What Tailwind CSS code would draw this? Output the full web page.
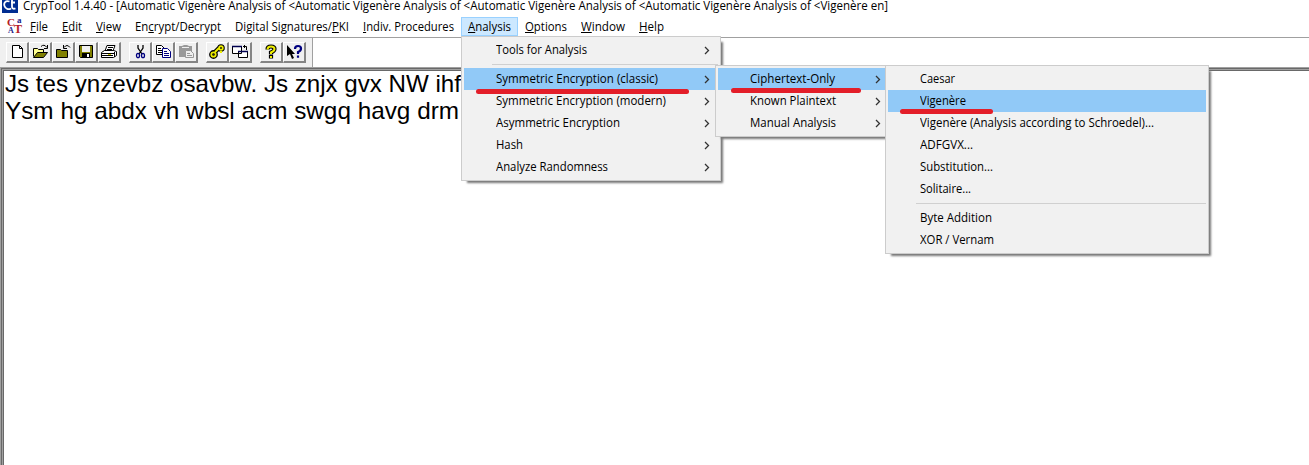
<!DOCTYPE html>
<html lang="en"><head><meta charset="utf-8"><title>CrypTool</title>
<script src="https://cdn.jsdelivr.net/npm/@tailwindcss/browser@4"></script></head>
<body class="w-[1309px] h-[465px] overflow-hidden relative bg-white text-black font-['Open_Sans','Noto_Sans',sans-serif] text-[12px] leading-[22px]">
<div class="flex flex-col h-full">
<header class="h-[15px] shrink-0 flex items-start leading-[12px]">
<svg class="w-[18px] h-[13px] shrink-0" viewBox="0 0 18 13"><path d="M2 0h16v13H2z" fill="#002d91"/><path d="M9.500 1.500C5.500 0 3.500 3 4.500 6c1 3 4 4 6.500 2.500M12 0v6.500q0 3 3.500 2M11 2.500h4" fill="none" stroke="#fff" stroke-width="1.800"/></svg>
<span class="ml-[5px] inline-block shrink-0 whitespace-nowrap origin-left" data-w="865">CrypTool 1.4.40 - [Automatic Vigenère Analysis of &lt;Automatic Vigenère Analysis of &lt;Automatic Vigenère Analysis of &lt;Automatic Vigenère Analysis of &lt;Vigenère en]</span>
</header>
<nav class="h-[22px] shrink-0 flex whitespace-nowrap leading-[24px] pl-[7px]">
<svg class="w-4 h-[18px] mt-[2px] mr-[7px] shrink-0" viewBox="0 0 16 18" font-family="Liberation Serif" font-weight="bold"><text x="0" y="9" font-size="11" fill="#b51c26">C</text><text x="10" y="6" font-size="9" fill="#25258a">a</text><text x="1" y="16" font-size="8" fill="#25258a">A</text><text x="7" y="16" font-size="12" fill="#b51c26">T</text></svg>
<span class="mr-[14px] shrink-0 origin-left" data-w="18"><u>F</u>ile</span><span class="mr-[14px] shrink-0 origin-left" data-w="20"><u>E</u>dit</span><span class="mr-[14px] shrink-0 origin-left" data-w="25"><u>V</u>iew</span><span class="mr-[14px] shrink-0 origin-left" data-w="86">En<u>c</u>rypt/Decrypt</span><span class="mr-[14px] shrink-0 origin-left" data-w="114">Digital Signatures/<u>P</u>KI</span><span class="mr-[7px] shrink-0 origin-left" data-w="91"><u>I</u>ndiv. Procedures</span>
<div class="w-[57px] h-[19px] mt-[2px] mr-[7px] pl-[6px] shrink-0 bg-[#cce8ff] border border-[#99d1ff] leading-[18px]"><span class="inline-block origin-left" data-w="43"><u>A</u>nalysis</span></div>
<span class="mr-[14px] shrink-0 origin-left" data-w="42"><u>O</u>ptions</span><span class="mr-[14px] shrink-0 origin-left" data-w="44"><u>W</u>indow</span><span class="shrink-0 origin-left" data-w="25"><u>H</u>elp</span>
</nav>
<div class="h-[30px] shrink-0 border-t border-[#a0a0a0] flex">
<div id="tools" class="w-[313px] bg-[#f0f0f0] border-r border-[#a0a0a0] flex pl-[6px] pt-[4px]"></div>
</div>
<div class="flex-1 border-t border-l border-[#a0a0a0]"><div class="h-full border-t border-l border-[#696969]"><div class="h-full border-t border-l border-[#a0a0a0]">
<main class="h-full border-t border-l border-[#696969] bg-white font-['Liberation_Sans',sans-serif] text-[24px] leading-[27px] pl-px whitespace-nowrap">
<div class="-mt-px"><span class="origin-left inline-block" data-w="456" data-font="24px Liberation Sans">Js tes ynzevbz osavbw. Js znjx gvx NW ihf</span></div>
<div><span class="origin-left inline-block" data-w="454" data-font="24px Liberation Sans">Ysm hg abdx vh wbsl acm swgq havg drm</span></div>
</main></div></div></div>
</div>
<section id="m1" class="absolute left-[461px] top-[36px] w-[260px] h-[145px] bg-[#f1f1f1] border border-[#ccc] p-[2px] shadow-[4px_4px_2px_-2px_#777]"></section>
<section id="m2" class="absolute left-[715px] top-[65px] w-[177px] h-[72px] bg-[#f1f1f1] border border-[#ccc] p-[2px] shadow-[4px_4px_2px_-2px_#777]"></section>
<section id="m3" class="absolute left-[885px] top-[65px] w-[324px] h-[189px] bg-[#f1f1f1] border border-[#ccc] p-[2px] shadow-[4px_4px_2px_-2px_#777]"></section>
<div class="absolute left-[476px] top-[89px] w-[213px] h-[5px] rounded-full bg-[#e31e29]"></div>
<div class="absolute left-[731px] top-[88px] w-[130px] h-[5px] rounded-full bg-[#e31e29]"></div>
<div class="absolute left-[900px] top-[109px] w-[93px] h-[5px] rounded-full bg-[#e31e29]"></div>
<script>
const icons={
new:'<path d="M5.500 2.500h7l3 3v9h-10z" fill="#fff" stroke="#000"/><path d="M12.500 2.500v3h3" fill="none" stroke="#000"/>',
open:'<path d="M3.500 13.500v-8h4l1 1h5v3" fill="#ffff90" stroke="#000"/><path d="M3.500 14.500l4-5h10l-4 5z" fill="#808000" stroke="#000"/><path d="M11 3.500q3-3 6 1M17.500 2v3.500H14" fill="none" stroke="#000"/>',
close:'<path d="M3.500 14.500v-8h4l1 1h6v7z" fill="#808000" stroke="#000"/><path d="M17 4.500q-3-4-6 0M10.500 2v3.500H14" fill="none" stroke="#000"/>',
save:'<path d="M3.500 2.500h13v12h-12l-1-1z" fill="#808000" stroke="#000"/><path d="M6 3h8v6H6z" fill="#f0f0f0"/><path d="M6 10h8v4H6z" fill="#000"/><path d="M11 11h2v3h-2z" fill="#fff"/>',
print:'<path d="M6 8l2-5.500h8L14 8M2.500 9.500l3-2h9l3 1v4l-3 2h-12z" fill="#fff" stroke="#000"/><path d="M9 4.500h5M8 6.500h5M3 10.500h12M3 12.500h11M15.500 9v5" stroke="#000"/><path d="M9 11.500h3" stroke="#cc0"/>',
cut:'<path d="M8 2v3l4 6M13 2v3L9 11" fill="none" stroke="#000" stroke-width="1.300"/><ellipse cx="8" cy="12.500" rx="1.500" ry="2.200" fill="none" stroke="#000080" stroke-width="1.300"/><ellipse cx="13" cy="12.500" rx="1.500" ry="2.200" fill="none" stroke="#000080" stroke-width="1.300"/>',
copy:'<path d="M3.500 2.500h5l3 3v6h-8z" fill="#fff" stroke="#000"/><path d="M5 5.500h3M5 7.500h4M5 9.500h4" stroke="#000"/><path d="M9.500 5.500h5l3 3v6h-8z" fill="#fff" stroke="#000080"/><path d="M11 8.500h3M11 10.500h5M11 12.500h5" stroke="#000080"/>',
paste:'<path d="M3 3h3l2-1h3l2 1h3v11H3z" fill="#999"/><path d="M6 4.500h7" stroke="#eee"/><path d="M9.500 7.500h5l3 3v4h-8z" fill="#eee" stroke="#999"/><path d="M11 10.500h3M11 12.500h5" stroke="#999"/>',
key:'<path d="M8 9l4-4" stroke="#000" stroke-width="4.500"/><circle cx="6.500" cy="11.500" r="2.300" fill="none" stroke="#000" stroke-width="4.200"/><circle cx="14" cy="5" r="1.800" fill="none" stroke="#000" stroke-width="4"/><path d="M8 9l4-4M14 8v2" stroke="#ee0" stroke-width="2"/><circle cx="6.500" cy="11.500" r="2.200" fill="none" stroke="#ee0" stroke-width="1.800"/><circle cx="14" cy="5" r="1.800" fill="none" stroke="#ee0" stroke-width="1.800"/>',
win:'<path d="M2.500 3.500h9v7h-9zM8.500 8.500h9v6h-9z" fill="#fff" stroke="#000"/><path d="M2 3.500h10M8 8.500h10" stroke="#000050" stroke-width="1.500"/><path d="M13 3.500h3.500V7M14.500 2v3" fill="none" stroke="#000"/>',
help:'<path d="M6.500 6.500q0-3 3.500-3t3.500 2.500q0 2-3.500 3.500v2M10 12v3.500" fill="none" stroke="#000" stroke-width="4.200"/><path d="M6.500 6.500q0-3 3.500-3t3.500 2.500q0 2-3.500 3.500v1.500M10 13v2" fill="none" stroke="#ee0" stroke-width="2"/>',
what:'<path d="M3 2v11l3-2 2 5 2-1-2-4h3z" fill="#000"/><path d="M11 6q0-3 3-3t3 2.500-3 3.500v2M14 12.500v2.200" fill="none" stroke="#000080" stroke-width="2.200"/>'};
const order=['new','open','close','save','print','','cut','copy','paste','','key','win','','help','what'];
document.getElementById('tools').innerHTML=order.map(k=>k?`<div class="w-[23px] h-[21px] bg-[#f0f0f0] border-r-2 border-b-2 border-r-[#858585] border-b-[#858585] border-l border-l-white border-t border-t-white shrink-0"><svg class="w-5 h-[18px]" viewBox="0 0 20 18">${icons[k]}</svg></div>`:'<div class="w-[8px] shrink-0"></div>').join('');
const menus={m1:[['Tools for Analysis',91],0,['Symmetric Encryption (classic)',162,1],['Symmetric Encryption (modern)',170],['Asymmetric Encryption',124],['Hash',27],['Analyze Randomness',112]],
m2:[['Ciphertext-Only',85,1],['Known Plaintext',86],['Manual Analysis',86]],
m3:[['Caesar',35],['Vigenère',46,1],['Vigenère (Analysis according to Schroedel)...',234],['ADFGVX...',53],['Substitution...',73],['Solitaire...',51],0,['Byte Addition',72],['XOR / Vernam',74]]};
for(const id in menus)document.getElementById(id).innerHTML=menus[id].map(r=>!r?'<div class="h-[7px] pt-[3px] pl-[28px]"><div class="h-px bg-[#d0d0d0]"></div></div>':`<div class="h-[22px] flex items-center pl-[32px] pr-[8px] ${r[2]?'bg-[#91c9f7]':''}"><span class="inline-block shrink-0 whitespace-nowrap origin-left" data-w="${r[1]}">${r[0]}</span>${id!='m3'?'<svg class="w-[6px] h-[9px] ml-auto shrink-0" viewBox="0 0 6 9"><path d="M1 1l3.500 3.500L1 8" fill="none" stroke="#333" stroke-width="1.300"/></svg>':''}</div>`).join('');
const ctx=document.createElement('canvas').getContext('2d');
document.querySelectorAll('[data-w]').forEach(e=>{
ctx.font=e.dataset.font||'12px "Open Sans"';
const w=+e.dataset.w;
e.style.width=w+'px';
e.style.transform=`scaleX(${w/ctx.measureText(e.textContent).width})`;
});
</script>
</body></html>
